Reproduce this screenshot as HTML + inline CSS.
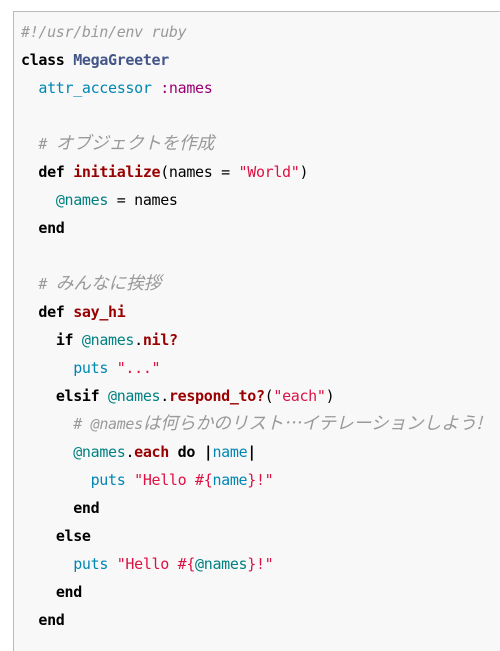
<!DOCTYPE html>
<html><head><meta charset="utf-8"><style>
body{margin:0;background:#fff;width:500px;height:639px;overflow:hidden}
pre{position:absolute;left:13px;top:11px;width:500px;height:640px;margin:0;box-sizing:border-box;border-left:1px solid #bbb;border-top:1px solid #bbb;background:#f8f8f8;padding:6px 0 0 7px;font-family:"DejaVu Sans Mono","Noto Sans CJK JP",monospace;font-size:15px;letter-spacing:-0.33px;line-height:28px;color:#000}
.c{color:#999;font-style:italic}.k{color:#000;font-weight:bold}.n{color:#445588;font-weight:bold}.b{color:#0086b3}.s{color:#990073}.st{color:#dd1144}.f{color:#990000;font-weight:bold}.i{color:#008080}
.j{font-family:"Noto Sans CJK JP",sans-serif;font-size:17.6px;letter-spacing:0;line-height:0}
</style></head><body><pre><span class="c">#!/usr/bin/env ruby</span>
<span class="k">class</span> <span class="n">MegaGreeter</span>
  <span class="b">attr_accessor</span> <span class="s">:names</span>

  <span class="c"># <span class="j">オブジェクトを作成</span></span>
  <span class="k">def</span> <span class="f">initialize</span>(names = <span class="st">"World"</span>)
    <span class="i">@names</span> = names
  <span class="k">end</span>

  <span class="c"># <span class="j">みんなに挨拶</span></span>
  <span class="k">def</span> <span class="f">say_hi</span>
    <span class="k">if</span> <span class="i">@names</span>.<span class="f">nil?</span>
      <span class="b">puts</span> <span class="st">"..."</span>
    <span class="k">elsif</span> <span class="i">@names</span>.<span class="f">respond_to?</span>(<span class="st">"each"</span>)
      <span class="c"># @names<span class="j">は何らかのリスト…イテレーションしよう!</span></span>
      <span class="i">@names</span>.<span class="f">each</span> <span class="k">do</span> <span class="k">|</span><span class="b">name</span><span class="k">|</span>
        <span class="b">puts</span> <span class="st">"Hello #{</span><span class="b">name</span><span class="st">}!"</span>
      <span class="k">end</span>
    <span class="k">else</span>
      <span class="b">puts</span> <span class="st">"Hello #{</span><span class="i">@names</span><span class="st">}!"</span>
    <span class="k">end</span>
  <span class="k">end</span></pre></body></html>
